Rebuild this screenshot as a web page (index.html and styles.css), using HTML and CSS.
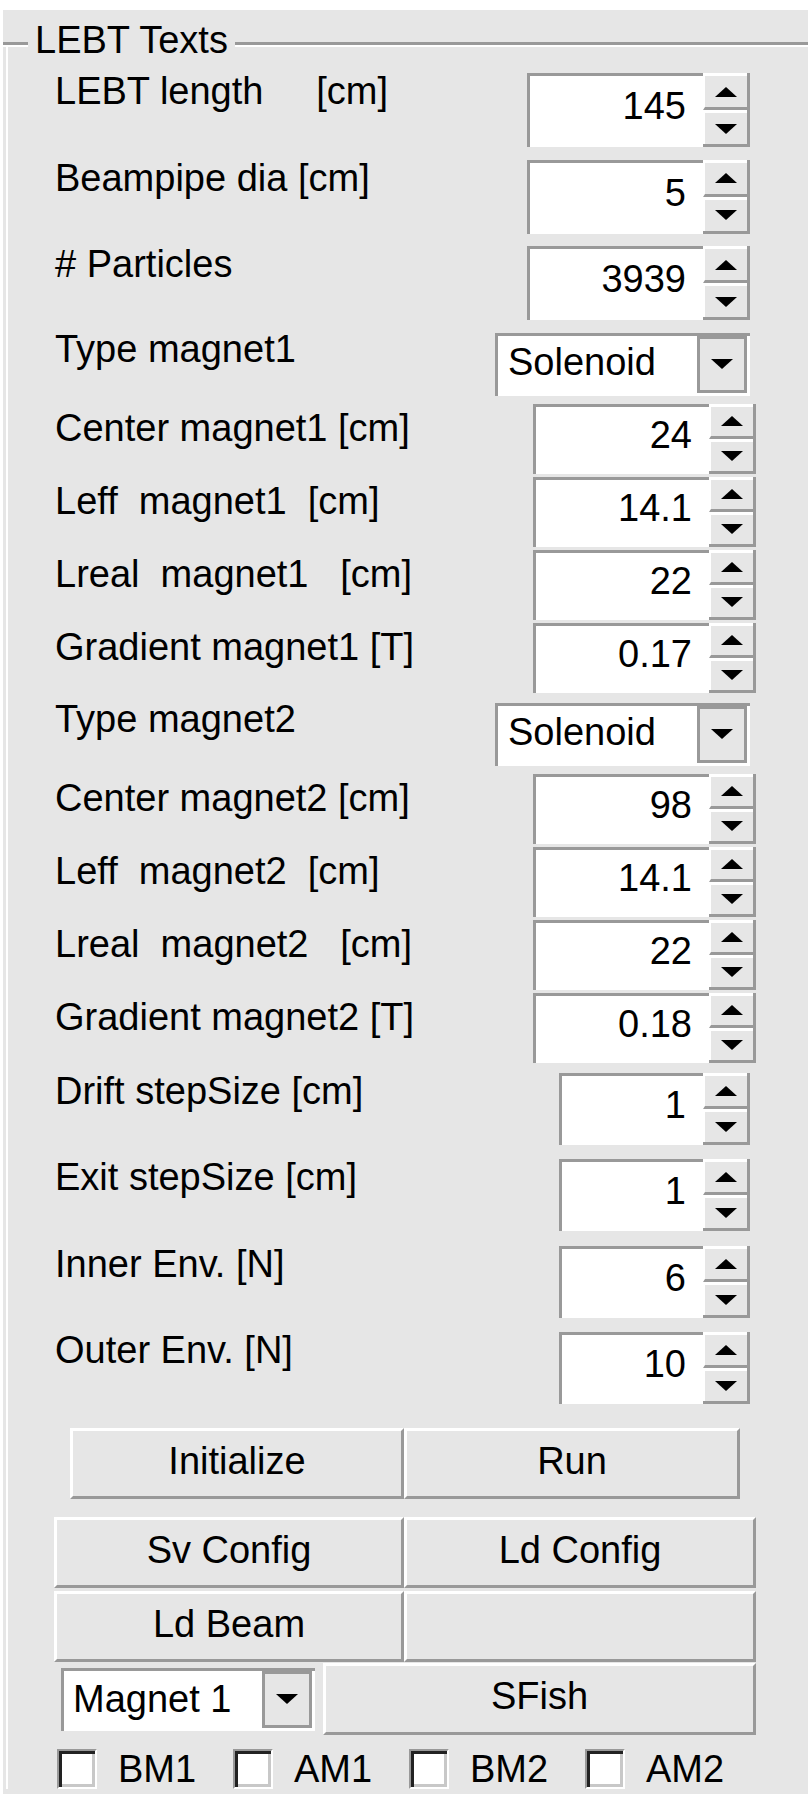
FILE: index.html
```html
<!DOCTYPE html>
<html lang="en">

<head>
    <meta charset="UTF-8">
    <title>LEBT Texts</title>
    <link rel="stylesheet" href="styles.css">
</head>

<body>
    <div class="panel">
        <div class="legend-row">
            <span class="rule rule-lead"></span>
            <span class="legend">LEBT Texts</span>
            <span class="rule"></span>
        </div>
        <div class="box">
            <div class="row top">
                <label class="name">LEBT length     [cm]</label>
                <div class="spin"><span class="val">145</span><span class="btns"><span class="up"></span><span class="dn"></span></span></div>
            </div>
            <div class="row top">
                <label class="name">Beampipe dia [cm]</label>
                <div class="spin"><span class="val">5</span><span class="btns"><span class="up"></span><span class="dn"></span></span></div>
            </div>
            <div class="row top">
                <label class="name"># Particles</label>
                <div class="spin"><span class="val">3939</span><span class="btns"><span class="up"></span><span class="dn"></span></span></div>
            </div>

            <!-- magnet 1 -->
            <div class="row type">
                <label class="name">Type magnet1</label>
                <div class="combo"><span class="combo-text">Solenoid</span><span class="combo-btn"></span></div>
            </div>
            <div class="row mag">
                <label class="name">Center magnet1 [cm]</label>
                <div class="spin"><span class="val">24</span><span class="btns"><span class="up"></span><span class="dn"></span></span></div>
            </div>
            <div class="row mag">
                <label class="name">Leff  magnet1  [cm]</label>
                <div class="spin"><span class="val">14.1</span><span class="btns"><span class="up"></span><span class="dn"></span></span></div>
            </div>
            <div class="row mag">
                <label class="name">Lreal  magnet1   [cm]</label>
                <div class="spin"><span class="val">22</span><span class="btns"><span class="up"></span><span class="dn"></span></span></div>
            </div>
            <div class="row mag end">
                <label class="name">Gradient magnet1 [T]</label>
                <div class="spin"><span class="val">0.17</span><span class="btns"><span class="up"></span><span class="dn"></span></span></div>
            </div>

            <!-- magnet 2 -->
            <div class="row type">
                <label class="name">Type magnet2</label>
                <div class="combo"><span class="combo-text">Solenoid</span><span class="combo-btn"></span></div>
            </div>
            <div class="row mag">
                <label class="name">Center magnet2 [cm]</label>
                <div class="spin"><span class="val">98</span><span class="btns"><span class="up"></span><span class="dn"></span></span></div>
            </div>
            <div class="row mag">
                <label class="name">Leff  magnet2  [cm]</label>
                <div class="spin"><span class="val">14.1</span><span class="btns"><span class="up"></span><span class="dn"></span></span></div>
            </div>
            <div class="row mag">
                <label class="name">Lreal  magnet2   [cm]</label>
                <div class="spin"><span class="val">22</span><span class="btns"><span class="up"></span><span class="dn"></span></span></div>
            </div>
            <div class="row mag end">
                <label class="name">Gradient magnet2 [T]</label>
                <div class="spin"><span class="val">0.18</span><span class="btns"><span class="up"></span><span class="dn"></span></span></div>
            </div>

            <div class="row low">
                <label class="name">Drift stepSize [cm]</label>
                <div class="spin"><span class="val">1</span><span class="btns"><span class="up"></span><span class="dn"></span></span></div>
            </div>
            <div class="row low">
                <label class="name">Exit stepSize [cm]</label>
                <div class="spin"><span class="val">1</span><span class="btns"><span class="up"></span><span class="dn"></span></span></div>
            </div>
            <div class="row low">
                <label class="name">Inner Env. [N]</label>
                <div class="spin"><span class="val">6</span><span class="btns"><span class="up"></span><span class="dn"></span></span></div>
            </div>
            <div class="row low">
                <label class="name">Outer Env. [N]</label>
                <div class="spin"><span class="val">10</span><span class="btns"><span class="up"></span><span class="dn"></span></span></div>
            </div>

            <div class="run-row">
                <button class="btn">Initialize</button>
                <button class="btn">Run</button>
            </div>
            <div class="btn-grid">
                <button class="btn">Sv Config</button>
                <button class="btn">Ld Config</button>
                <button class="btn">Ld Beam</button>
                <button class="btn"></button>
            </div>
            <div class="tools">
                <div class="combo small"><span class="combo-text">Magnet 1</span><span class="combo-btn"></span></div>
                <button class="btn sfish">SFish</button>
            </div>
            <div class="checks">
                <label class="check"><span class="tick"></span>BM1</label>
                <label class="check"><span class="tick"></span>AM1</label>
                <label class="check"><span class="tick"></span>BM2</label>
                <label class="check"><span class="tick"></span>AM2</label>
            </div>
        </div>
    </div>
</body>

</html>
```

FILE: styles.css
```css
* {
    box-sizing: border-box;
}

body {
    margin: 0px;
    background: #fff;
    overflow: hidden;
    font-family: "Liberation Sans", Arial, sans-serif;
    font-size: 38px;
    color: #000;
}

.panel {
    margin: 10px 0 0 3px;
    height: 1784px;
    background: #e6e6e6;
    overflow: hidden;
}

/* titled border */
.legend-row {
    display: flex;
    align-items: flex-start;
    height: 37px;
}

.rule {
    flex: 1;
    margin-top: 32px;
    height: 5px;
    border-top: 3px solid #999;
    border-bottom: 2px solid #fff;
}

.rule-lead {
    flex: 0 0 25px;
}

.legend {
    margin-top: 11px;
    padding: 0 7px;
    line-height: 38px;
    white-space: nowrap;
}

.box {
    margin-left: 3px;
    border-left: 2px solid #fff;
    padding-top: 26px;
}

/* label + control rows */
.row {
    display: flex;
    justify-content: space-between;
    align-items: flex-start;
    padding-left: 47px;
}

.row.top {
    height: 86.67px;
}

.row.type {
    height: 71px;
}

.row.mag {
    height: 73px;
}

.row.mag.end {
    height: 80px;
}

.row.low {
    height: 86.33px;
}

.name {
    white-space: pre;
    line-height: 38px;
    margin-top: -1px;
}

.row.type .name {
    margin-top: -3px;
}

.row.mag .name {
    margin-top: 5px;
}

/* spinner */
.spin {
    display: flex;
    height: 74px;
    margin-right: 58px;
}

.row.mag .spin {
    height: 70px;
    margin-right: 52px;
}

.row.low .spin {
    height: 72px;
}

.val {
    width: 176px;
    display: flex;
    align-items: center;
    justify-content: flex-end;
    padding: 0 17px 11px 0;
    line-height: 38px;
    background: #fff;
    border-top: 3px solid #999;
    border-left: 3px solid #999;
}

.row.low .val {
    width: 144px;
}

.btns {
    width: 47px;
    display: flex;
    flex-direction: column;
    border-right: 3px solid #999;
    border-bottom: 3px solid #999;
}

.up,
.dn {
    flex: 1 1 0;
    display: flex;
    align-items: center;
    justify-content: center;
    background: #e6e6e6;
    border-top: 3px solid #fff;
    border-left: 2px solid #fff;
}

.up {
    border-bottom: 3px solid #999;
}

.up::after {
    content: "";
    border-left: 11px solid transparent;
    border-right: 11px solid transparent;
    border-bottom: 10px solid #000;
}

.dn::after,
.combo-btn::after {
    content: "";
    border-left: 11px solid transparent;
    border-right: 11px solid transparent;
    border-top: 10px solid #000;
}

/* combo box */
.combo {
    display: flex;
    align-items: flex-start;
    width: 255px;
    height: 63px;
    margin-right: 58px;
    padding-right: 3px;
    background: #fff;
    border-top: 3px solid #999;
    border-left: 3px solid #999;
}

.combo-text {
    flex: 1;
    align-self: center;
    padding: 0 0 7px 10px;
    line-height: 38px;
    white-space: nowrap;
}

.combo-btn {
    width: 50px;
    height: 57px;
    display: flex;
    align-items: center;
    justify-content: center;
    background: #e6e6e6;
    border: 3px solid #999;
}

.combo.small {
    width: 254px;
    margin: 0 0 0 7px;
}

.combo.small .combo-text {
    padding-left: 9px;
    padding-bottom: 3px;
}

/* push buttons */
.btn {
    height: 71px;
    margin: 0;
    padding: 0 0 6px 0;
    font: inherit;
    line-height: 38px;
    color: #000;
    background: #e6e6e6;
    border: 3px solid;
    border-color: #fff #999 #999 #fff;
    border-radius: 0;
}

.run-row {
    display: grid;
    grid-template-columns: 334px 336px;
    margin: 10px 0 0 62px;
}

.btn-grid {
    display: grid;
    grid-template-columns: 350px 352px;
    row-gap: 3px;
    margin: 18px 0 0 46px;
}

.tools {
    display: flex;
    align-items: center;
    margin: 1px 0 0 46px;
}

.btn.sfish {
    width: 433px;
    height: 72px;
    margin-left: 8px;
}

/* check boxes */
.checks {
    display: grid;
    grid-template-columns: repeat(4, 176px);
    margin: 14px 0 0 49px;
}

.check {
    display: flex;
    align-items: center;
    line-height: 38px;
}

.tick {
    width: 40px;
    height: 40px;
    margin-right: 21px;
    background: #fff;
    border: 2px solid;
    border-color: #999 #fff #fff #999;
    box-shadow: inset 3px 3px 0 #222, inset -3px -3px 0 #c8c8c8;
}
```
